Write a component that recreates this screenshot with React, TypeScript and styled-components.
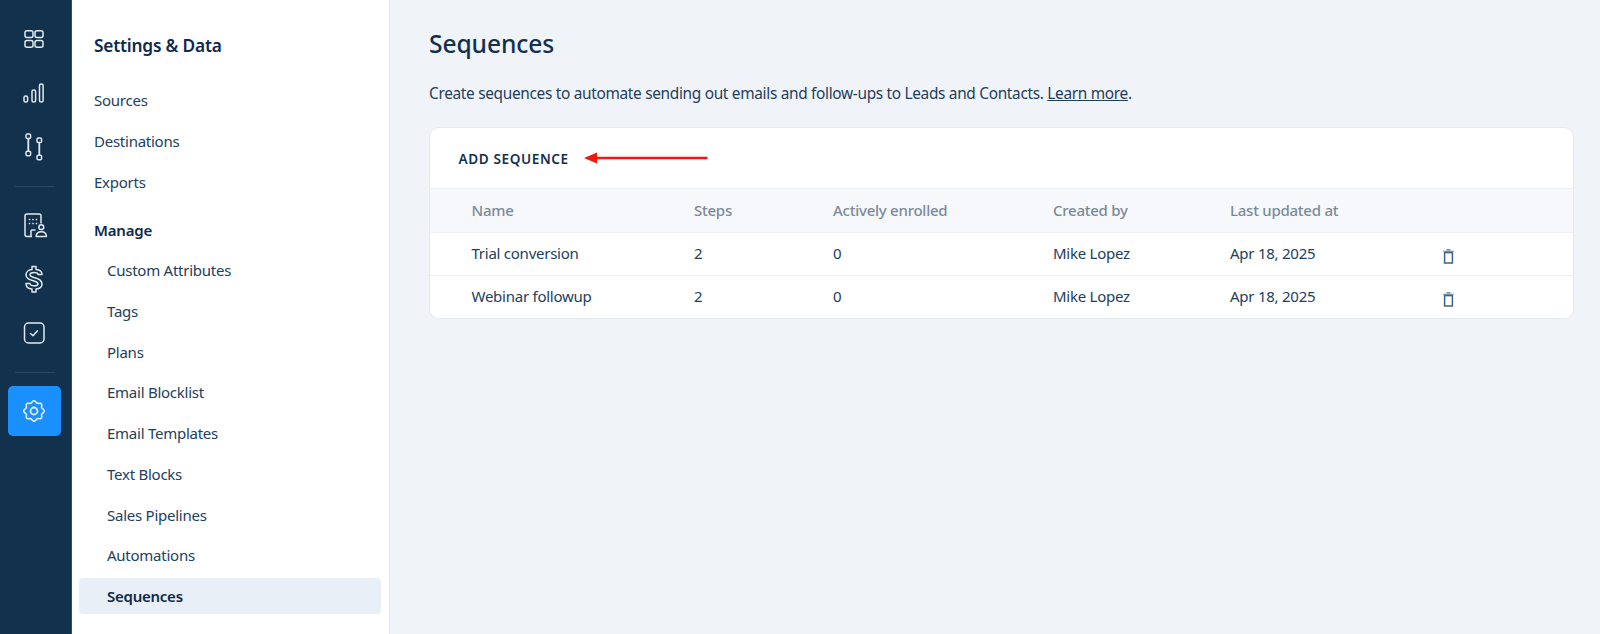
import React from "react";
import styled, { createGlobalStyle } from "styled-components";

const Global = createGlobalStyle`
  html, body { margin: 0; padding: 0; height: 634px; overflow: hidden; background: #f0f3f8; }
  #root { height: 634px; }
  * { box-sizing: border-box; }
  body { font-family: "Noto Sans", "Open Sans", sans-serif; color: #0f2c4c; }
`;

const Page = styled.div`
  display: flex;
  width: 1600px;
  height: 634px;
`;

const Rail = styled.nav`
  width: 72px;
  flex: none;
  background: #12314d;
  border-right: 1px solid #2b5072;
  display: flex;
  flex-direction: column;
  align-items: center;
  padding: 12px 2px 0 0;
`;

const RailSlot = styled.div<{ $active?: boolean }>`
  width: 53px;
  height: ${(p) => (p.$active ? "50px" : "54px")};
  flex: none;
  display: flex;
  align-items: center;
  justify-content: center;
  padding-right: 1.5px;
  border-radius: 5px;
  background: ${(p) => (p.$active ? "#1a90ff" : "transparent")};
  svg { display: block; overflow: visible; }
`;

const RailDivider = styled.div<{ $after: number }>`
  width: 40px;
  height: 1px;
  flex: none;
  background: #2a4864;
  margin: 12px 0 ${(p) => p.$after}px;
`;

const Side = styled.aside`
  width: 318px;
  flex: none;
  background: #fff;
  border-right: 1px solid #e8ecf2;
  padding: 33px 8px 0 7px;
`;

const SideTitle = styled.div`
  font-size: 17.3px;
  line-height: 25px;
  font-weight: 600;
  color: #0e2a4a;
  padding-left: 15px;
  letter-spacing: -0.2px;
  margin-bottom: 24px;
`;

const SideList = styled.div`
  display: flex;
  flex-direction: column;
  gap: 4.75px;
`;

const SideItem = styled.div<{ $indent?: boolean; $active?: boolean }>`
  height: 36px;
  display: flex;
  align-items: center;
  padding-left: ${(p) => (p.$indent ? "28px" : "15px")};
  font-size: 15px;
  letter-spacing: -0.25px;
  font-weight: ${(p) => (p.$active ? 600 : 400)};
  color: ${(p) => (p.$active ? "#0e2a4a" : "#21405f")};
  background: ${(p) => (p.$active ? "#e8eff7" : "transparent")};
  border-radius: 4px;
`;

const SideHeading = styled.div`
  height: 35px;
  margin-top: 8px;
  display: flex;
  align-items: center;
  padding-left: 15px;
  font-size: 15px;
  font-weight: 600;
  letter-spacing: -0.2px;
  color: #0e2a4a;
`;

const Main = styled.main`
  flex: 1;
  padding: 24px 26px 0 39px;
`;

const Title = styled.h1`
  margin: 0;
  font-size: 24.6px;
  line-height: 40px;
  font-weight: 500;
  color: #12304f;
  letter-spacing: -0.1px;
`;

const Intro = styled.p`
  margin: 18px 0 0;
  font-size: 15.4px;
  line-height: 24px;
  letter-spacing: -0.31px;
  color: #1f3d5c;
  a { color: inherit; text-decoration: underline; }
`;

const Card = styled.section`
  margin-top: 21px;
  background: #fff;
  border: 1px solid #e5e9f0;
  border-radius: 10px;
  overflow: hidden;
`;

const CardHead = styled.div`
  height: 61px;
  display: flex;
  align-items: center;
  padding-left: 28.5px;
  border-bottom: 1px solid #edf0f5;
`;

const AddButton = styled.div`
  font-size: 13.6px;
  font-weight: 600;
  letter-spacing: 0.6px;
  color: #12304f;
  text-transform: uppercase;
`;

const Arrow = styled.svg`
  margin-left: 15px;
  display: block;
`;

const Row = styled.div<{ $head?: boolean; $last?: boolean }>`
  display: grid;
  grid-template-columns: 222.5px 139px 220px 177px 213px 1fr;
  align-items: center;
  height: ${(p) => (p.$head ? "44px" : p.$last ? "42px" : "43px")};
  padding: 0 0 2px 41.5px;
  background: ${(p) => (p.$head ? "#f6f8fc" : "#fff")};
  border-bottom: ${(p) => (p.$last ? "none" : "1px solid #edf0f5")};
  font-size: 15px;
  letter-spacing: -0.25px;
  font-weight: ${(p) => (p.$head ? 500 : 400)};
  color: ${(p) => (p.$head ? "#7b8a99" : "#21405f")};
`;

const Trash = styled.svg`
  display: block;
  margin-top: 7px;
`;

const Icon = ({ children, w = 24, h = 24 }: { children: React.ReactNode; w?: number; h?: number }) => (
  <svg width={w} height={h} viewBox={`0 0 ${w} ${h}`} fill="none" stroke="#e4e9ef" strokeWidth="1.5" strokeLinecap="round" strokeLinejoin="round">
    {children}
  </svg>
);

const side = ["Custom Attributes", "Tags", "Plans", "Email Blocklist", "Email Templates", "Text Blocks", "Sales Pipelines", "Automations"];

const rows = ["Trial conversion", "Webinar followup"];

const gearPath = (() => {
  const pts: string[] = [];
  for (let i = 0; i < 96; i++) {
    const a = (i / 96) * Math.PI * 2;
    const r = 9.3 + 0.95 * Math.cos(8 * a);
    pts.push(`${(12 + r * Math.sin(a)).toFixed(2)} ${(12 - r * Math.cos(a)).toFixed(2)}`);
  }
  return `M${pts.join("L")}Z`;
})();

const TrashIcon = () => (
  <Trash width="11" height="15" viewBox="0 0 11 15" fill="none">
    <rect x="1.600" y="3.600" width="7.800" height="10.400" stroke="#3f6483" strokeWidth="1.500" />
    <path d="M0.300 2.400h10.400M3.500 0.800h4" stroke="#7c93a8" strokeWidth="1.400" />
  </Trash>
);

export default function App() {
  return (
    <Page>
      <Global />
      <Rail>
        <RailSlot>
          <Icon>
            <rect x="3" y="3.800" width="8" height="6.800" rx="2" />
            <rect x="13" y="3.800" width="8" height="6.800" rx="2" />
            <rect x="3" y="13.400" width="8" height="6.800" rx="2" />
            <rect x="13" y="13.400" width="8" height="6.800" rx="2" />
          </Icon>
        </RailSlot>
        <RailSlot>
          <Icon>
            <rect x="2" y="15" width="3.600" height="6" rx="1.600" />
            <rect x="10" y="9" width="3.600" height="12" rx="1.600" />
            <rect x="17.500" y="3" width="3.600" height="18" rx="1.600" />
          </Icon>
        </RailSlot>
        <RailSlot>
          <Icon w={24} h={30}>
            <rect x="4" y="2" width="4.600" height="4.600" rx="1.400" />
            <path d="M6.300 6.600v12.500" strokeWidth="1.800" />
            <rect x="4" y="19.200" width="4.600" height="4.600" rx="1.400" />
            <rect x="15" y="6" width="4.600" height="4.600" rx="1.400" />
            <path d="M17.300 10.600v12.500" strokeWidth="1.800" />
            <rect x="15" y="23.200" width="4.600" height="4.600" rx="1.400" />
          </Icon>
        </RailSlot>
        <RailDivider $after={11} />
        <RailSlot>
          <Icon>
            <path d="M9 23.500H5a2 2 0 0 1-2-2V3a2 2 0 0 1 2-2h12a2 2 0 0 1 2 2v7" />
            <path d="M9 23.500V18a1 1 0 0 1 1-1h3" />
            <path d="M7.500 6.500h.01M11 6.500h.01M14.500 6.500h.01M7.500 10.500h.01M11 10.500h.01M14.500 10.500h.01" strokeWidth="1.700" />
            <circle cx="19.300" cy="14.200" r="2.400" />
            <path d="M14.200 23.500c0-3 2.200-4.800 5.100-4.800s5.100 1.800 5.100 4.800z" />
          </Icon>
        </RailSlot>
        <RailSlot>
          <Icon w={24} h={30}>
            <path
              d="M10 2.500h4v3c3.500.3 6 2.200 6 5h-4c0-1.500-1.500-2-4-2s-4 .8-4 2.300S9.500 12.800 12 13.500c4.500 1.100 8 2.500 8 6.500 0 3-2.500 4.800-6 5v3h-4v-3c-3.500-.2-6-2-6-5.500h4c0 1.500 1.500 2.300 4 2.300s4-.8 4-2.100-1.500-2-4-2.700c-4.500-1.200-8-2.300-8-6.200 0-2.800 2.500-5 6-5.300z"
              strokeWidth="1.500"
            />
          </Icon>
        </RailSlot>
        <RailSlot>
          <Icon>
            <rect x="2.500" y="2" width="19.500" height="20" rx="4" />
            <path d="M8.500 12.500l2.500 2.300 4.500-5" />
          </Icon>
        </RailSlot>
        <RailDivider $after={13} />
        <RailSlot $active>
          <Icon>
            <path d={gearPath} strokeWidth="1.600" />
            <circle cx="12" cy="12" r="3.500" strokeWidth="1.800" />
          </Icon>
        </RailSlot>
      </Rail>
      <Side>
        <SideTitle>Settings &amp; Data</SideTitle>
        <SideList>
          <SideItem>Sources</SideItem>
          <SideItem>Destinations</SideItem>
          <SideItem>Exports</SideItem>
          <SideHeading>Manage</SideHeading>
          {side.map((s) => (
            <SideItem key={s} $indent>{s}</SideItem>
          ))}
          <SideItem $indent $active>Sequences</SideItem>
        </SideList>
      </Side>
      <Main>
        <Title>Sequences</Title>
        <Intro>
          Create sequences to automate sending out emails and follow-ups to Leads and Contacts. <a href="#learn">Learn more</a>.
        </Intro>
        <Card>
          <CardHead>
            <AddButton>Add sequence</AddButton>
            <Arrow width="124" height="14" viewBox="0 0 124 14">
              <path d="M0 7l13-5.500v4.300h110.500v2.400H13v4.300z" fill="#f5160c" />
            </Arrow>
          </CardHead>
          <Row $head>
            <span>Name</span>
            <span>Steps</span>
            <span>Actively enrolled</span>
            <span>Created by</span>
            <span>Last updated at</span>
            <span />
          </Row>
          {rows.map((r, i) => (
            <Row key={r} $last={i === rows.length - 1}>
              <span>{r}</span>
              <span>2</span>
              <span>0</span>
              <span>Mike Lopez</span>
              <span>Apr 18, 2025</span>
              <TrashIcon />
            </Row>
          ))}
        </Card>
      </Main>
    </Page>
  );
}
